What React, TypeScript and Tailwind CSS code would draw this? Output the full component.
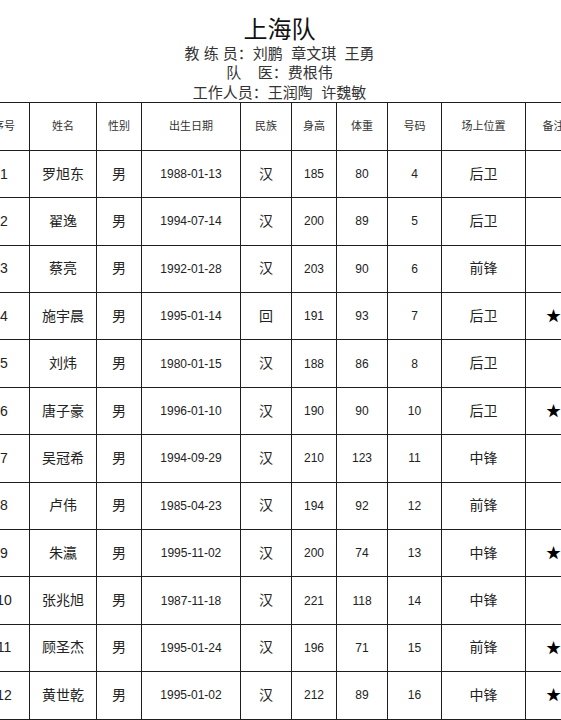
import React from "react"

const cols = [
  { key: "no", label: "序号", w: "w-[50px]" },
  { key: "name", label: "姓名", w: "w-[67px]" },
  { key: "sex", label: "性别", w: "w-[45px]" },
  { key: "birth", label: "出生日期", w: "w-[99px]" },
  { key: "nation", label: "民族", w: "w-[51px]" },
  { key: "height", label: "身高", w: "w-[45px]" },
  { key: "weight", label: "体重", w: "w-[51px]" },
  { key: "num", label: "号码", w: "w-[54px]" },
  { key: "pos", label: "场上位置", w: "w-[84px]" },
  { key: "note", label: "备注", w: "w-[56px]" },
]

const players = [
  ["1", "罗旭东", "男", "1988-01-13", "汉", "185", "80", "4", "后卫", ""],
  ["2", "翟逸", "男", "1994-07-14", "汉", "200", "89", "5", "后卫", ""],
  ["3", "蔡亮", "男", "1992-01-28", "汉", "203", "90", "6", "前锋", ""],
  ["4", "施宇晨", "男", "1995-01-14", "回", "191", "93", "7", "后卫", "★"],
  ["5", "刘炜", "男", "1980-01-15", "汉", "188", "86", "8", "后卫", ""],
  ["6", "唐子豪", "男", "1996-01-10", "汉", "190", "90", "10", "后卫", "★"],
  ["7", "吴冠希", "男", "1994-09-29", "汉", "210", "123", "11", "中锋", ""],
  ["8", "卢伟", "男", "1985-04-23", "汉", "194", "92", "12", "前锋", ""],
  ["9", "朱瀛", "男", "1995-11-02", "汉", "200", "74", "13", "中锋", "★"],
  ["10", "张兆旭", "男", "1987-11-18", "汉", "221", "118", "14", "中锋", ""],
  ["11", "顾圣杰", "男", "1995-01-24", "汉", "196", "71", "15", "前锋", "★"],
  ["12", "黄世乾", "男", "1995-01-02", "汉", "212", "89", "16", "中锋", "★"],
]

// per-column text style for data cells
const cellText: Record<string, string> = {
  no: "text-[14px]",
  name: "text-[14px]",
  sex: "text-[14px]",
  birth: "text-[12px]",
  nation: "text-[14px]",
  height: "text-[12px]",
  weight: "text-[12px]",
  num: "text-[12px]",
  pos: "text-[14px]",
  note: "text-[15px] text-black",
}

export default function App() {
  return (
    <div className="w-[561px] h-[720px] overflow-hidden bg-white text-[#222] font-['Liberation_Sans','Noto_Sans_CJK_SC',sans-serif]">
      <div className="pt-[16px] flex flex-col items-center pr-[2px]">
        <h1 className="text-[24px] leading-[28px] text-[#111] font-normal font-['Liberation_Serif','Noto_Sans_CJK_SC',serif]">上海队</h1>
        <div className="text-[15px] leading-[19.3px] text-[#333] flex flex-col items-center">
          <p className="whitespace-pre">教 练 员：刘鹏  章文琪  王勇</p>
          <p className="whitespace-pre">队    医：费根伟</p>
          <p className="whitespace-pre">工作人员：王润陶  许魏敏</p>
        </div>
      </div>

      <div className="ml-[-21px] w-[602px] border-t border-[#1e1e1e]">
        <div className="flex h-[48px] border-b border-[#1e1e1e]">
          {cols.map((c, i) => (
            <div
              key={c.key}
              className={`${c.w} shrink-0 flex items-center justify-center text-[11px] text-[#333] ${i > 0 ? "border-l border-[#1e1e1e]" : ""}`}
            >
              {c.label}
            </div>
          ))}
        </div>
        {players.map((row) => (
          <div key={row[0]} className="flex h-[47.4px] border-b border-[#1e1e1e]">
            {cols.map((c, i) => (
              <div
                key={c.key}
                className={`${c.w} shrink-0 flex items-center justify-center ${cellText[c.key]} ${i > 0 ? "border-l border-[#1e1e1e]" : ""}`}
              >
                {row[i]}
              </div>
            ))}
          </div>
        ))}
      </div>
    </div>
  )
}
